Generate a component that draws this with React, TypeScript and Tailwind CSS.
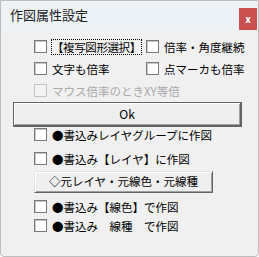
import React from 'react';

const font = { fontFamily: '"Noto Sans CJK JP", "Noto Sans", sans-serif' };

const Box = ({ disabled }: { disabled?: boolean }) => (
  <span
    className={`inline-block w-[13px] h-[13px] shrink-0 border ${
      disabled ? 'border-[#c4c4c4] bg-[#f4f4f4]' : 'border-[#7a7a7a] bg-white shadow-[inset_1px_1px_0_#c8c8c8]'
    }`}
  />
);

const Check = ({ label, disabled, focus, w }: { label: string; disabled?: boolean; focus?: boolean; w?: string }) => (
  <div className={`flex items-center h-[13px] ${w || ''}`}>
    <Box disabled={disabled} />
    <span
      className={`ml-[5px] text-[11.5px] leading-[14px] whitespace-pre ${disabled ? 'text-[#a8a8a8]' : 'text-black'} ${
        focus ? 'outline outline-1 outline-dotted outline-black tracking-[-0.4px]' : ''
      }`}
    >
      {label}
    </span>
  </div>
);

export default function App() {
  return (
    <div className="w-[259px] h-[257px] bg-white" style={font}>
      <div className="w-[259px] h-[257px] flex flex-col bg-[#f0f0f0] border border-[#bdbdbd] rounded-b-[4px] overflow-hidden">
        <div className="h-[29px] bg-[#edf2f7] flex justify-between shrink-0">
          <span className="pl-[9px] pt-[6px] text-[13px] leading-[16px] text-[#222]">作図属性設定</span>
          <div className="mt-[7px] mr-[1px] w-[18px] h-[22px] bg-[#c9504f] flex items-center justify-center text-white text-[10px] font-bold leading-none">
            x
          </div>
        </div>
        <div className="flex flex-col pl-[33px] pt-[10px]">
          <div className="flex">
            <Check label="【複写図形選択】" focus w="w-[112px]" />
            <Check label="倍率・角度継続" />
          </div>
          <div className="flex mt-[9px]">
            <Check label="文字も倍率" w="w-[112px]" />
            <Check label="点マーカも倍率" />
          </div>
          <div className="mt-[9px]">
            <Check label="マウス倍率のときXY等倍" disabled />
          </div>
        </div>
        <div className="ml-[12px] mt-[5px] w-[229px] h-[25px] flex items-center justify-center text-[12px] bg-[#efefef] border border-[#646464] border-r-2 border-b-2 shadow-[inset_1px_1px_0_#ffffff,inset_-1px_-1px_0_#a0a0a0]">
          Ok
        </div>
        <div className="flex flex-col pl-[33px] pt-[1px]">
          <Check label="●書込みレイヤグループに作図" />
          <div className="mt-[11px]">
            <Check label="●書込み【レイヤ】に作図" />
          </div>
          <div className="mt-[6px] w-[179px] h-[22px] flex items-center justify-center text-[11.5px] bg-[#efefef] border border-[#e3e3e3] border-r-[#646464] border-b-[#646464] shadow-[inset_1px_1px_0_#ffffff,inset_-1px_-1px_0_#a0a0a0]">
            ◇元レイヤ・元線色・元線種
          </div>
          <div className="mt-[7px]">
            <Check label="●書込み【線色】で作図" />
          </div>
          <div className="mt-[6px]">
            <Check label="●書込み　線種　で作図" />
          </div>
        </div>
      </div>
    </div>
  );
}
